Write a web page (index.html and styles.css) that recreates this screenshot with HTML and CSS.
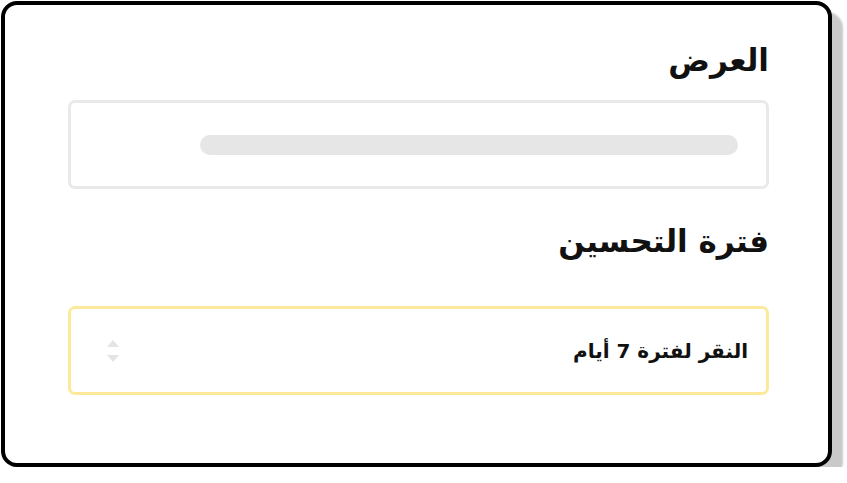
FILE: index.html
```html
<!DOCTYPE html>
<html lang="ar">
<head>
  <meta charset="UTF-8" />
  <meta name="viewport" content="width=device-width, initial-scale=1.0"/>
  <title>إعدادات الحملة</title>
  <link rel="stylesheet" href="styles.css">
</head>
<body>
  <main class="card" dir="rtl">
    <label class="field-label">العرض</label>
    <div class="field">
      <span class="skeleton"></span>
    </div>

    <label class="field-label spaced">فترة التحسين</label>
    <div class="field select">
      <span class="select-value">النقر لفترة 7 أيام</span>
      <svg class="select-arrows" width="16" height="24" viewBox="0 0 16 24">
        <path d="M8 1 L14 8 H2 Z" fill="#e4e4e4"/>
        <path d="M8 23 L14 16 H2 Z" fill="#e4e4e4"/>
      </svg>
    </div>
  </main>
</body>
</html>
```

FILE: styles.css
```css
body {
  margin: 0;
  padding: 1px 0 0 1px;
  background-color: #fff;
  font-family: 'DejaVu Sans', sans-serif;
  color: #111;
}

.card {
  box-sizing: border-box;
  width: 831px;
  height: 466px;
  padding: 37px 59px 0 63px;
  background-color: #fff;
  border: 4px solid #000;
  border-radius: 16px;
  box-shadow: 11px 11px 2px #c9c9c9;
}

.field-label {
  display: block;
  font-size: 31px;
  font-weight: bold;
  line-height: 36px;
  margin-bottom: 22px;
}

.field-label.spaced {
  margin-top: 34px;
  margin-bottom: 47px;
}

.field {
  box-sizing: border-box;
  display: flex;
  align-items: center;
  height: 89px;
  padding: 0 28px;
  border: 3px solid #e9e9e9;
  border-radius: 7px;
}

.skeleton {
  width: 538px;
  height: 20px;
  border-radius: 10px;
  background-color: #e6e6e6;
}

.select {
  justify-content: space-between;
  padding: 0 18px 0 34px;
  border-color: #fce99a;
}

.select-value {
  font-size: 20px;
  font-weight: bold;
}

.select-arrows {
  display: block;
}
```
